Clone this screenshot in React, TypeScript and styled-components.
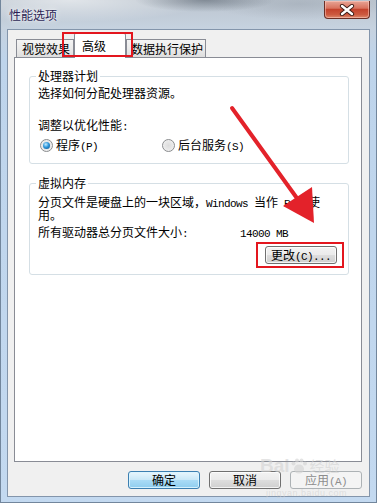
import React from 'react';
import styled, { createGlobalStyle, css } from 'styled-components';

const GlobalStyle = createGlobalStyle`
  html, body { margin: 0; padding: 0; }
  body {
    font-family: "Noto Sans CJK SC", "Liberation Sans", sans-serif;
    font-size: 12px;
    color: #000;
  }
`;

const Window = styled.div`
  position: relative;
  width: 377px;
  height: 503px;
  box-sizing: border-box;
  display: flex;
  flex-direction: column;
  padding: 0 7px 6px 7px;
  overflow: hidden;
  background:
    radial-gradient(ellipse 70px 12px at 205px 0px, rgba(80, 90, 102, 0.55), transparent),
    radial-gradient(ellipse 140px 22px at 70px 0px, rgba(255, 255, 255, 0.55), transparent),
    radial-gradient(ellipse 90px 16px at 300px 4px, rgba(150, 160, 172, 0.45), transparent),
    linear-gradient(180deg, #bcc5cf 0px, #c6d2df 28px, #bed4eb 60px, #c3d9f0 100%);
  box-shadow: inset 1px 0 0 #72869c, inset -1px 0 0 #72869c, inset 0 -1px 0 #72869c;
`;

const TitleBar = styled.div`
  height: 29px;
  display: flex;
  justify-content: space-between;
  align-items: flex-start;
`;

const Title = styled.div`
  margin: 7px 0 0 2px;
  font-size: 12px;
  line-height: 16px;
  color: #2b1f55;
  text-shadow: 0 0 6px rgba(255, 255, 255, 0.9), 0 0 2px rgba(255, 255, 255, 0.8);
`;

const CloseButton = styled.div`
  width: 46px;
  height: 18px;
  margin-top: 1px;
  box-sizing: border-box;
  border: 1px solid #6b2f26;
  border-top: none;
  border-radius: 0 0 4px 4px;
  background: linear-gradient(180deg, #e7a596 0%, #d9735f 42%, #c4432d 50%, #cd5a40 80%, #dc8a6e 100%);
  box-shadow: inset 0 0 0 1px rgba(255, 210, 200, 0.5);
  display: flex;
  align-items: center;
  justify-content: center;
`;

const Client = styled.div`
  flex: 1;
  display: flex;
  flex-direction: column;
  border: 1px solid #8395ab;
  background: #f0f0f0;
  padding: 3px 7px 7px 6px;
`;

const TabStrip = styled.div`
  height: 24px;
  display: flex;
  align-items: flex-end;
  padding-left: 2px;
`;

const Tab = styled.div<{ $active?: boolean; $w: number; $pad: number }>`
  width: ${(p) => p.$w}px;
  box-sizing: border-box;
  height: 18px;
  border: 1px solid #898c95;
  border-bottom: none;
  background: linear-gradient(180deg, #f4f4f4 0%, #ebebeb 50%, #dedede 100%);
  padding-left: ${(p) => p.$pad}px;
  line-height: 17px;
  white-space: nowrap;
  ${(p) =>
    p.$active &&
    css`
      height: 25px;
      margin-bottom: -1px;
      background: #fff;
      position: relative;
      z-index: 1;
      line-height: 24px;
      border-radius: 2px 2px 0 0;
    `}
`;

const Panel = styled.div`
  height: 405px;
  box-sizing: border-box;
  border: 1px solid #898c95;
  background: #fff;
  padding: 10px 12px 0 14px;
  display: flex;
  flex-direction: column;
`;

const Group = styled.fieldset<{ $gap?: number; $padRight?: number }>`
  margin: ${(p) => p.$gap ?? 0}px 0 0 0;
  min-width: 0;
  border: 1px solid #d5dfe5;
  border-radius: 3px;
  padding: 1px ${(p) => p.$padRight ?? 10}px 10px 8px;
`;

const Legend = styled.legend`
  padding: 0 2px;
  margin-left: -2px;
  line-height: 16px;
`;

const Line = styled.div<{ $top?: number }>`
  height: 16px;
  line-height: 16px;
  margin-top: ${(p) => p.$top ?? 0}px;
  white-space: nowrap;
`;

const Para = styled.div<{ $top?: number }>`
  line-height: 13px;
  margin-top: ${(p) => p.$top ?? 0}px;
  white-space: nowrap;
`;

const Mono = styled.span`
  font-family: "Liberation Mono", "DejaVu Sans Mono", monospace;
  font-size: 11px;
  line-height: 0;
  letter-spacing: -0.6px;
`;

const RadioRow = styled.div`
  display: grid;
  grid-template-columns: 122px auto;
  height: 16px;
  margin-top: 4px;
  line-height: 16px;
`;

const RadioOption = styled.label`
  display: flex;
  align-items: center;
  gap: 3px;
  padding-left: 2px;
  white-space: nowrap;
`;

const RadioCircle = styled.span<{ $checked?: boolean }>`
  width: 13px;
  height: 13px;
  flex: none;
  box-sizing: border-box;
  border-radius: 50%;
  border: 1px solid #8a8c8e;
  background: radial-gradient(circle at 50% 50%, #dcdcdc 0%, #e9e9e9 55%, #fbfbfb 100%);
  display: flex;
  align-items: center;
  justify-content: center;
  ${(p) =>
    p.$checked &&
    css`
      &::after {
        content: '';
        width: 7px;
        height: 7px;
        border-radius: 50%;
        background: radial-gradient(circle at 40% 35%, #c6ecff 0%, #2f98dc 45%, #0a4b86 100%);
      }
    `}
`;

const SizeRow = styled.div`
  display: grid;
  grid-template-columns: 202px auto;
  height: 16px;
  line-height: 16px;
  margin-top: 3px;
  white-space: nowrap;
`;

const ButtonRow = styled.div<{ $top: number; $gap?: number }>`
  display: flex;
  justify-content: flex-end;
  gap: ${(p) => p.$gap ?? 0}px;
  margin-top: ${(p) => p.$top}px;
`;

const Button = styled.button<{ $variant?: 'default' | 'disabled' }>`
  width: 72px;
  height: 18px;
  box-sizing: border-box;
  padding: 0;
  font-family: inherit;
  font-size: 12px;
  line-height: 16px;
  color: #000;
  border: 1px solid #707070;
  border-radius: 3px;
  background: linear-gradient(180deg, #f3f3f3 0%, #ebebeb 48%, #dddddd 52%, #cfcfcf 100%);
  box-shadow: inset 0 0 0 1px rgba(255, 255, 255, 0.75);
  white-space: nowrap;
  overflow: visible;
  ${(p) =>
    p.$variant === 'default' &&
    css`
      border-color: #3c7fb1;
      background: linear-gradient(180deg, #e8f6fd 0%, #c9e8f8 48%, #a9dbf6 52%, #8fcdef 100%);
      box-shadow: inset 0 0 0 1px rgba(220, 245, 255, 0.9);
    `}
  ${(p) =>
    p.$variant === 'disabled' &&
    css`
      border-color: #adb2b5;
      background: #f4f4f4;
      box-shadow: none;
      color: #8d8d8d;
    `}
`;

const RedFrame = styled.div<{ $x: number; $y: number; $w: number; $h: number }>`
  position: absolute;
  left: ${(p) => p.$x}px;
  top: ${(p) => p.$y}px;
  width: ${(p) => p.$w}px;
  height: ${(p) => p.$h}px;
  box-sizing: border-box;
  border: 2px solid #e3161e;
  pointer-events: none;
  z-index: 5;
`;

const Overlay = styled.svg`
  position: absolute;
  left: 0;
  top: 0;
  pointer-events: none;
  z-index: 6;
`;

const Watermark = styled.div`
  position: absolute;
  left: 260px;
  top: 456px;
  z-index: 4;
  pointer-events: none;
  color: rgba(210, 210, 210, 0.6);
  display: flex;
  flex-direction: column;
  align-items: flex-start;
`;

const WaterTop = styled.div`
  display: flex;
  align-items: center;
  font-family: "Liberation Sans", sans-serif;
  font-weight: bold;
  font-size: 19px;
  line-height: 19px;
`;

const WaterCn = styled.span`
  font-family: "Noto Sans CJK SC", sans-serif;
  font-size: 15px;
  font-weight: normal;
  margin-left: 2px;
`;

const WaterSub = styled.div`
  font-family: "Liberation Sans", sans-serif;
  font-size: 9px;
  line-height: 10px;
  margin: 13px 0 0 6px;
  letter-spacing: 0.5px;
`;

export default function App() {
  return (
    <>
      <GlobalStyle />
      <Window>
        <TitleBar>
          <Title>性能选项</Title>
          <CloseButton>
            <svg width="16" height="12" viewBox="0 0 16 12">
              <path d="M3 2 L13 10 M13 2 L3 10" stroke="#3a1a14" strokeWidth="4.2" strokeLinecap="round" />
              <path d="M3 2 L13 10 M13 2 L3 10" stroke="#ffffff" strokeWidth="2.4" strokeLinecap="round" />
            </svg>
          </CloseButton>
        </TitleBar>
        <Client>
          <TabStrip>
            <Tab $w={58} $pad={5}>视觉效果</Tab>
            <Tab $w={52} $pad={7} $active>高级</Tab>
            <Tab $w={80} $pad={4}>数据执行保护</Tab>
          </TabStrip>
          <Panel>
            <Group>
              <Legend>处理器计划</Legend>
              <Line>选择如何分配处理器资源。</Line>
              <Line $top={16}>调整以优化性能<Mono>:</Mono></Line>
              <RadioRow>
                <RadioOption>
                  <RadioCircle $checked />
                  <span>程序<Mono>(P)</Mono></span>
                </RadioOption>
                <RadioOption>
                  <RadioCircle />
                  <span>后台服务<Mono>(S)</Mono></span>
                </RadioOption>
              </RadioRow>
            </Group>
            <Group $gap={11} $padRight={11}>
              <Legend>虚拟内存</Legend>
              <Para $top={3}>
                分页文件是硬盘上的一块区域，<Mono>Windows </Mono>当作<Mono> RAM </Mono>使
                <br />
                用。
              </Para>
              <SizeRow>
                <span>所有驱动器总分页文件大小<Mono>:</Mono></span>
                <span><Mono>14000 MB</Mono></span>
              </SizeRow>
              <ButtonRow $top={6}>
                <Button>更改<Mono>(C)...</Mono></Button>
              </ButtonRow>
            </Group>
          </Panel>
          <ButtonRow $top={9} $gap={9}>
            <Button $variant="default">确定</Button>
            <Button>取消</Button>
            <Button $variant="disabled">应用<Mono>(A)</Mono></Button>
          </ButtonRow>
        </Client>
        <Watermark>
          <WaterTop>
            Bai
            <svg width="18" height="18" viewBox="0 0 18 18">
              <ellipse cx="9" cy="12" rx="5" ry="4.5" fill="currentColor" />
              <circle cx="3.5" cy="6.5" r="2" fill="currentColor" />
              <circle cx="7" cy="3.5" r="2" fill="currentColor" />
              <circle cx="11.5" cy="3.5" r="2" fill="currentColor" />
              <circle cx="15" cy="6.5" r="2" fill="currentColor" />
            </svg>
            <WaterCn>经验</WaterCn>
          </WaterTop>
          <WaterSub>jingyan.baidu.com</WaterSub>
        </Watermark>
        <RedFrame $x={62} $y={32} $w={71} $h={25} />
        <RedFrame $x={256} $y={242} $w={88} $h={26} />
        <Overlay width="377" height="503" viewBox="0 0 377 503">
          <line x1="232" y1="108" x2="299" y2="201" stroke="#e3222a" strokeWidth="4" strokeLinecap="round" />
          <polygon points="314,223 283,206 312,187" fill="#e3222a" />
        </Overlay>
      </Window>
    </>
  );
}
